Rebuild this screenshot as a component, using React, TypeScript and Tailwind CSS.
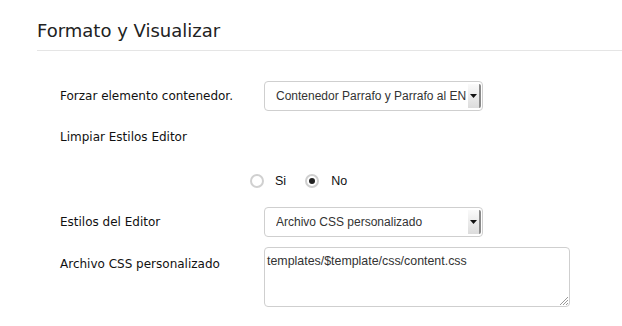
import React from "react";

const Arrow = () => (
  <div className="absolute right-[1px] top-[2px] bottom-[2px] w-[13px] flex items-center justify-center bg-gradient-to-b from-[#fafafa] to-[#dcdcdc] border-r-2 border-[#8a8a8a] rounded-r-[2px]">
    <svg width="7" height="4" viewBox="0 0 7 4"><path d="M0 0h7L3.5 4z" fill="#111" /></svg>
  </div>
);

export default function App() {
  return (
    <div className="w-[622px] h-[326px] bg-white overflow-hidden relative" style={{ fontFamily: '"DejaVu Sans", Verdana, sans-serif' }}>
      <div className="ml-[37px] pt-[19px] h-[51px] border-b border-[#e5e5e5]">
        <h2 className="text-[18px] leading-[24px] text-[#222]">Formato y Visualizar</h2>
      </div>

      <div className="pl-[60px]">
        <div className="flex items-center mt-[30px] h-[30px]">
          <div className="w-[204px] text-[12px] text-[#111]">Forzar elemento contenedor.</div>
          <div className="relative w-[219px] h-[30px] border border-[#cfcfcf] rounded-[4px] bg-white overflow-hidden">
            <div className="absolute left-[11px] right-[16px] top-0 bottom-0 flex items-center overflow-hidden whitespace-nowrap text-[12px] text-[#333]" style={{ fontFamily: '"Liberation Sans", Arial, sans-serif' }}>
              Contenedor Parrafo y Parrafo al ENTER
            </div>
            <Arrow />
          </div>
        </div>

        <div className="mt-[18px] h-[16px] flex items-center text-[12px] text-[#111]">Limpiar Estilos Editor</div>

        <div className="flex items-center mt-[28px] h-[16px] pl-[190px] text-[12.5px] text-[#111]" style={{ fontFamily: '"Liberation Sans", Arial, sans-serif' }}>
          <span className="w-[14px] h-[14px] rounded-full border-2 border-[#d0d0d0] bg-white" />
          <span className="ml-[11px]">Si</span>
          <span className="ml-[19px] w-[14px] h-[14px] rounded-full border-2 border-[#cfcfcf] bg-white flex items-center justify-center">
            <span className="w-[6px] h-[6px] rounded-full bg-[#222]" />
          </span>
          <span className="ml-[12px]">No</span>
        </div>

        <div className="flex items-center mt-[18px] h-[30px]">
          <div className="w-[204px] text-[12px] text-[#111]">Estilos del Editor</div>
          <div className="relative w-[219px] h-[30px] border border-[#cfcfcf] rounded-[4px] bg-white overflow-hidden">
            <div className="absolute left-[11px] right-[16px] top-0 bottom-0 flex items-center overflow-hidden whitespace-nowrap text-[12px] text-[#333]" style={{ fontFamily: '"Liberation Sans", Arial, sans-serif' }}>
              Archivo CSS personalizado
            </div>
            <Arrow />
          </div>
        </div>

        <div className="flex items-start mt-[10px]">
          <div className="w-[204px] text-[12px] text-[#111] mt-[8px]">Archivo CSS personalizado</div>
          <div className="relative w-[306px] h-[60px] border border-[#cfcfcf] rounded-[4px] bg-white">
            <div className="pl-[2px] pt-[6px] text-[12.4px] text-[#333] leading-[14px]" style={{ fontFamily: '"Liberation Sans", Arial, sans-serif' }}>
              templates/$template/css/content.css
            </div>
            <svg className="absolute right-[1px] bottom-[1px]" width="9" height="9" viewBox="0 0 9 9">
              <path d="M9 1L1 9M9 4L4 9M9 7L7 9" stroke="#999" strokeWidth="1" />
            </svg>
          </div>
        </div>
      </div>
    </div>
  );
}
